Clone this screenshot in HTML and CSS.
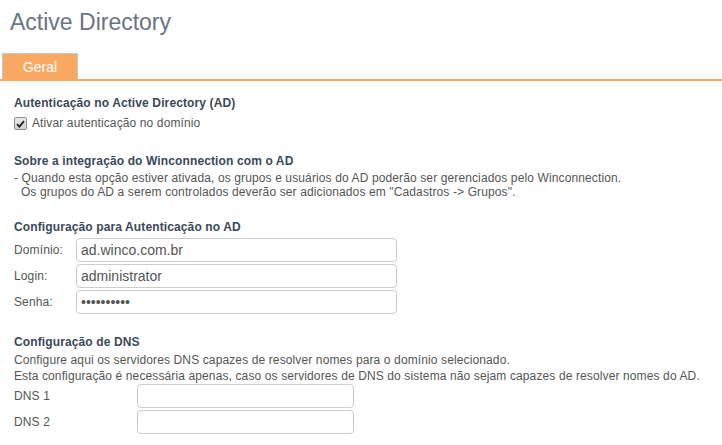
FILE: index.html
```html
<!DOCTYPE html>
<html>
<head>
<meta charset="utf-8">
<link rel="stylesheet" href="styles.css">
</head>
<body>
<h1 class="title">Active Directory</h1>
<div class="tabs">
  <div class="tab">Geral</div>
</div>
<div class="content">
  <section class="sec sec-first">
    <h2 class="head">Autenticação no Active Directory (AD)</h2>
    <label class="check"><span class="box"><svg width="9" height="8" viewBox="0 0 9 8"><path d="M1 4.2 L3.4 6.6 L8 1.2" fill="none" stroke="#222" stroke-width="1.8"/></svg></span>Ativar autenticação no domínio</label>
  </section>
  <section class="sec sec-about">
    <h2 class="head">Sobre a integração do Winconnection com o AD</h2>
    <p class="text">- Quando esta opção estiver ativada, os grupos e usuários do AD poderão ser gerenciados pelo Winconnection.<br>&nbsp; Os grupos do AD a serem controlados deverão ser adicionados em "Cadastros -&gt; Grupos".</p>
  </section>
  <section class="sec sec-auth">
    <h2 class="head">Configuração para Autenticação no AD</h2>
    <div class="form">
      <div class="row"><span class="lbl">Domínio:</span><input class="inp" type="text" value="ad.winco.com.br"></div>
      <div class="row"><span class="lbl">Login:</span><input class="inp" type="text" value="administrator"></div>
      <div class="row"><span class="lbl">Senha:</span><input class="inp" type="password" value="1234567890"></div>
    </div>
  </section>
  <section class="sec">
    <h2 class="head">Configuração de DNS</h2>
    <p class="text dns-text">Configure aqui os servidores DNS capazes de resolver nomes para o domínio selecionado.<br>Esta configuração é necessária apenas, caso os servidores de DNS do sistema não sejam capazes de resolver nomes do AD.</p>
    <div class="form dns">
      <div class="row"><span class="lbl">DNS 1</span><input class="inp" type="text"></div>
      <div class="row"><span class="lbl">DNS 2</span><input class="inp" type="text"></div>
    </div>
  </section>
</div>
</body>
</html>
```
FILE: styles.css
```css
body {
  margin: 0;
  font-family: "Liberation Sans", Arial, sans-serif;
  font-size: 12px;
  letter-spacing: 0.12px;
  color: #555;
  background: #fff;
}
.title {
  margin: 0;
  padding: 9px 0 0 10px;
  height: 44px;
  box-sizing: border-box;
  font-size: 23px;
  font-weight: normal;
  letter-spacing: 0;
  color: #6a7483;
  line-height: 26px;
}
.tabs {
  border-bottom: 2px solid #f8a862;
  padding-left: 2px;
  margin-top: 9px;
  display: flex;
}
.tab {
  width: 74px;
  height: 25px;
  background: #f9a961;
  border: 1px solid #c6c6c6;
  border-bottom: none;
  color: #fff;
  font-size: 14px;
  letter-spacing: 0;
  line-height: 27px;
  text-align: center;
}
.content {
  padding: 15px 14px 0 14px;
}
.sec {
  margin: 0 0 21px 0;
}
.sec-first { margin-bottom: 23px; }
.sec-about { margin-bottom: 21px; }
.head {
  margin: 0;
  font-size: 12px;
  font-weight: bold;
  color: #3b4859;
  line-height: 14px;
}
.check {
  display: flex;
  align-items: center;
  gap: 5px;
  margin-top: 6px;
  line-height: 15px;
}
.box {
  width: 11px;
  height: 11px;
  border: 1px solid #8f8f8f;
  border-radius: 2px;
  background: linear-gradient(#e9e9e9, #d4d4d4);
  display: flex;
  align-items: center;
  justify-content: center;
  flex: none;
}
.text {
  margin: 3px 0 0 0;
  line-height: 14px;
}
.dns-text {
  margin-top: 3px;
  line-height: 16px;
}
.form {
  margin-top: 4px;
  display: flex;
  flex-direction: column;
  gap: 2px;
}
.row {
  display: flex;
  align-items: center;
}
.lbl {
  width: 62px;
  flex: none;
}
.inp {
  width: 321px;
  height: 24px;
  box-sizing: border-box;
  border: 1px solid #cccccc;
  border-radius: 4px;
  padding: 0 4px;
  font-family: "Liberation Sans", Arial, sans-serif;
  font-size: 14px;
  color: #555;
  outline: none;
  margin: 0;
}
.dns { margin-top: 0; }
.dns .lbl { width: 123px; }
.dns .inp { width: 217px; }
```
